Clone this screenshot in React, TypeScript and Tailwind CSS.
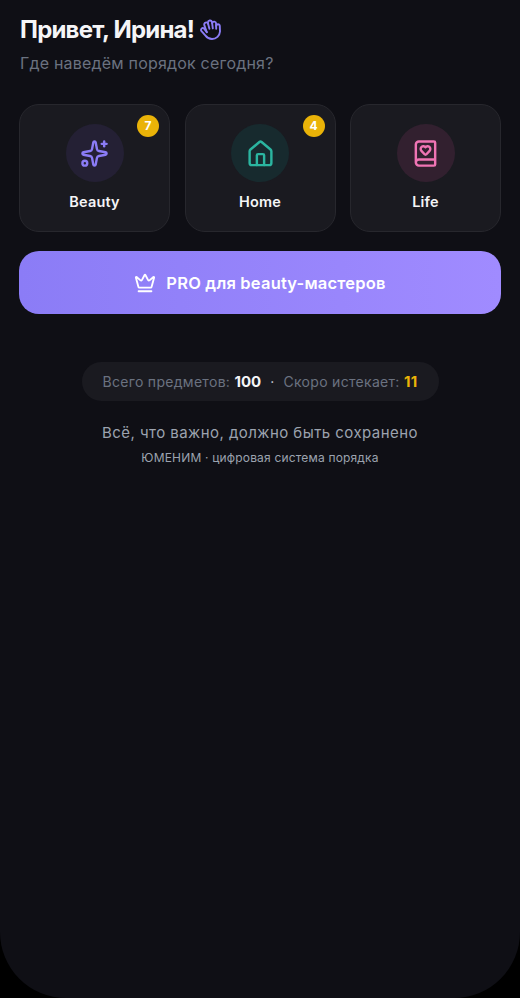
import React from 'react';
import { Sparkles, BookHeart, Crown } from 'lucide-react';

const HomeIcon: React.FC<{ size?: number; className?: string }> = ({ size = 24, className }) => (
  <svg
    width={size}
    height={size}
    viewBox="0 0 24 24"
    fill="none"
    stroke="currentColor"
    strokeWidth="2"
    strokeLinecap="round"
    strokeLinejoin="round"
    className={className}
  >
    <path d="M3 10.2a2 2 0 0 1 .7-1.5l7.4-6.2a1.4 1.4 0 0 1 1.8 0l7.4 6.2a2 2 0 0 1 .7 1.5v9.6a1.8 1.8 0 0 1-1.8 1.8H4.8A1.8 1.8 0 0 1 3 19.8z" />
    <path d="M15 21.6v-8.1a1 1 0 0 0-1-1h-4a1 1 0 0 0-1 1v8.1" />
  </svg>
);

const WaveIcon: React.FC<{ className?: string }> = ({ className }) => (
  <svg
    width="22"
    height="22"
    viewBox="0 0 22 22"
    fill="none"
    stroke="currentColor"
    strokeWidth="1.9"
    strokeLinecap="round"
    strokeLinejoin="round"
    className={className}
  >
    <path d="M12.2 4a2 2 0 0 1 3.9.6l.1 5.2" />
    <path d="M8.1 4.8l-.2-1.2a2.1 2.1 0 0 1 4.1-.6l.8 6.4" />
    <path d="M9.4 9.8L8.1 4.8a2 2 0 0 0-3.8 1.3l2.5 7.1" />
    <path d="M16.2 7a1.8 1.8 0 0 1 3.6 0l.2 5.5a8 8 0 0 1-8 7.5c-3.2 0-4.8-1.2-6.5-3.4l-4-4.4a1.8 1.8 0 0 1 2.6-2.5l2.7 3.5" />
  </svg>
);

const sections = [
  { id: 'beauty', label: 'Beauty', icon: Sparkles, iconClass: 'text-[#8b7cf6]', circleClass: 'bg-[#242034]', badge: 7 },
  { id: 'home', label: 'Home', icon: HomeIcon, iconClass: 'text-[#2bb5a0]', circleClass: 'bg-[#172a2e]', badge: 4 },
  { id: 'life', label: 'Life', icon: BookHeart, iconClass: 'text-[#f074b4]', circleClass: 'bg-[#32202f]', badge: 0 },
];

const App: React.FC = () => {
  return (
    <div className="bg-black">
      <div className="h-[998px] w-[520px] overflow-hidden rounded-b-[66px] bg-[#0f0f15] px-[19px] font-['Inter','Liberation_Sans',sans-serif]">
        <header className="pl-px pt-3.5">
          <h1 className="flex items-center gap-1.5 whitespace-nowrap text-2xl font-bold leading-8 tracking-[-0.8px] text-[#f5f5f7]">
            Привет, Ирина!
            <WaveIcon className="text-[#8b7cf6]" />
          </h1>
          <p className="mt-[5px] whitespace-nowrap text-base leading-6 tracking-[0.2px] text-[#6b7280]">
            Где наведём порядок сегодня?
          </p>
        </header>

        <div className="mt-[29px] grid grid-cols-3 gap-[14.5px]">
          {sections.map(({ id, label, icon: Icon, iconClass, circleClass, badge }) => (
            <button
              key={id}
              className="relative flex h-32 flex-col items-center rounded-[20px] border border-[#27272d] bg-[#1a1a20] pt-[19px]"
            >
              <span className={`flex h-[58px] w-[58px] items-center justify-center rounded-full ${circleClass}`}>
                <Icon size={29} className={iconClass} />
              </span>
              <span className="mt-2 text-[14.5px] font-semibold leading-6 tracking-[0.15px] text-[#f5f5f7]">{label}</span>
              {badge > 0 && (
                <span className="absolute right-2.5 top-2.5 flex h-[22px] w-[22px] items-center justify-center rounded-full bg-[#eab308] text-xs font-bold text-white">
                  {badge}
                </span>
              )}
            </button>
          ))}
        </div>

        <button className="mt-[19px] flex h-[63px] w-full items-center justify-center gap-2.5 rounded-[20px] bg-linear-to-r from-[#8b7cf6] to-[#a08bff] pt-px text-[16.5px] font-semibold tracking-[0.2px] text-white">
          <Crown size={22} />
          PRO для beauty-мастеров
        </button>

        <div className="mt-12 flex justify-center">
          <div className="flex h-[39px] w-[357px] items-center justify-center whitespace-nowrap rounded-full bg-[#1a1a20] pt-px text-sm tracking-[0.3px] text-[#6b7280]">
            <span>Всего предметов: <b className="text-[15px] font-bold tracking-normal text-[#f5f5f7]">100</b></span>
            <span className="mx-[9px] text-[#d1d5db]">·</span>
            <span>Скоро истекает: <b className="text-[15px] font-bold tracking-[0.3px] text-[#eab308]">11</b></span>
          </div>
        </div>

        <footer className="mt-5 whitespace-nowrap text-center text-[#9ca3af]">
          <p className="text-[15px] leading-6 tracking-[0.45px]">Всё, что важно, должно быть сохранено</p>
          <p className="mt-[3px] text-xs leading-5 tracking-[0.18px]">ЮМЕНИМ · цифровая система порядка</p>
        </footer>
      </div>
    </div>
  );
};

export default App;
